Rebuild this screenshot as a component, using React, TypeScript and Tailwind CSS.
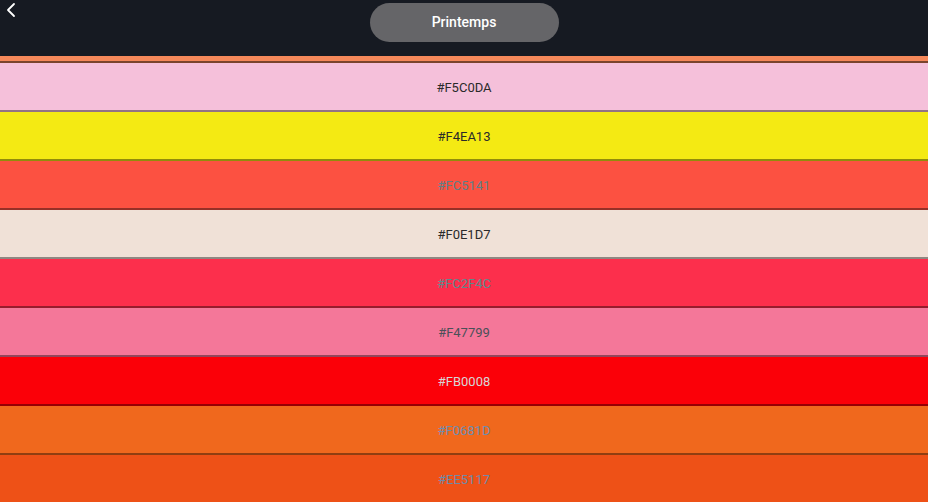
import React from "react";

const rows: { hex: string; text: string }[] = [
  { hex: "#F5C0DA", text: "#2a2a2a" },
  { hex: "#F4EA13", text: "#2a2a2a" },
  { hex: "#FC5141", text: "#5f7f86" },
  { hex: "#F0E1D7", text: "#2a2a2a" },
  { hex: "#FC2F4C", text: "#5f8a8c" },
  { hex: "#F47799", text: "#4a5058" },
  { hex: "#FB0008", text: "#d6d6d6" },
  { hex: "#F0681D", text: "#6f8cae" },
  { hex: "#EE5117", text: "#6f8aa8" },
];

export default function App() {
  return (
    <div
      className="w-[928px] h-[502px] overflow-hidden bg-[#161a22] flex flex-col"
      style={{ fontFamily: "Roboto, 'Liberation Sans', sans-serif" }}
    >
      <div className="relative h-[56px] shrink-0 bg-[#161a22] flex justify-center pt-[3px]">
        <button className="absolute left-[4px] top-[2px] text-white">
          <svg width="14" height="16" viewBox="0 0 14 16" fill="none">
            <path d="M10 2 L4 8 L10 14" stroke="white" strokeWidth="1.8" strokeLinecap="round" strokeLinejoin="round" />
          </svg>
        </button>
        <div className="w-[189px] h-[39px] rounded-full bg-[#656568] flex items-center justify-center text-white text-[14px] font-medium">
          Printemps
        </div>
      </div>
      <div className="h-[7px] shrink-0 bg-[#F5885A] border-b-2 border-b-black/50" />
      {rows.map((r) => (
        <div
          key={r.hex}
          className="h-[49px] shrink-0 flex items-center justify-center text-[13px] pt-[3px] border-b-2 border-b-black/40"
          style={{ backgroundColor: r.hex, color: r.text }}
        >
          {r.hex}
        </div>
      ))}
    </div>
  );
}
